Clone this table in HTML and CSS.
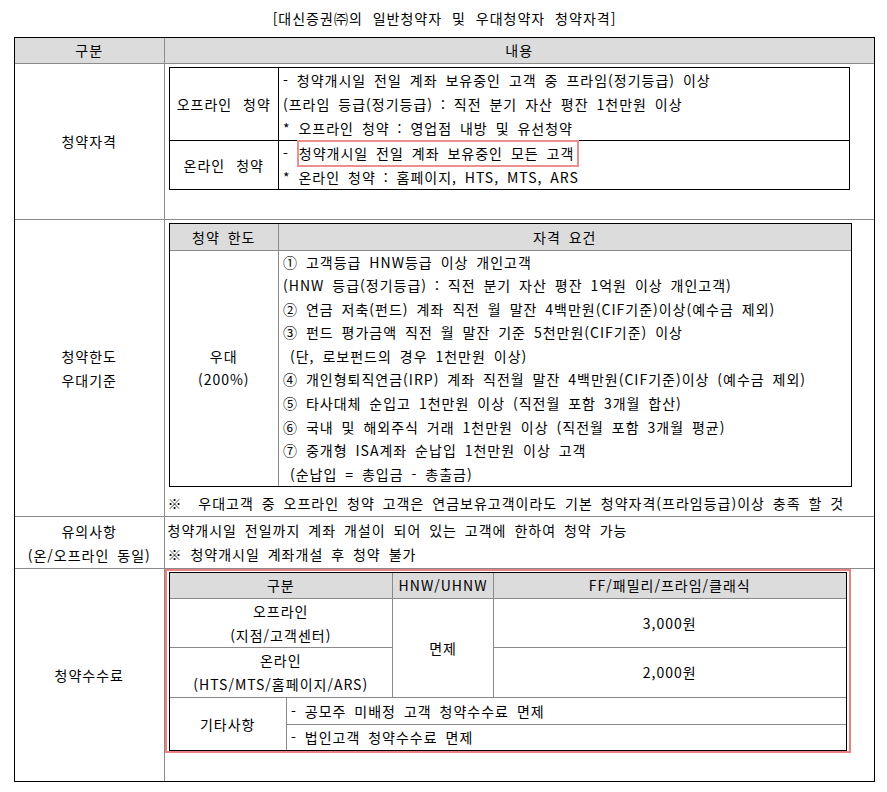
FILE: index.html
```html
<!DOCTYPE html>
<html lang="ko">
<head>
<meta charset="utf-8">
<title>청약자격</title>
<link rel="stylesheet" href="styles.css">
</head>
<body>
<div class="page">
  <p class="title">[대신증권㈜의 일반청약자 및 우대청약자 청약자격]</p>
  <div class="frame">
    <table class="main">
      <colgroup><col class="main-c1"><col></colgroup>
      <thead>
        <tr><th class="m-head">구분</th><th class="m-head">내용</th></tr>
      </thead>
      <tbody>
        <tr>
          <td class="m-label">청약자격</td>
          <td class="m-cell cell-qual">
            <div class="box box-qual">
              <table class="grid grid-dark">
                <colgroup><col class="g-c1"><col></colgroup>
                <tbody>
                  <tr>
                    <td class="g-label">오프라인 청약</td>
                    <td class="g-text">
                      <div>- 청약개시일 전일 계좌 보유중인 고객 중 프라임(정기등급) 이상</div>
                      <div>(프라임 등급(정기등급) : 직전 분기 자산 평잔 1천만원 이상</div>
                      <div>* 오프라인 청약 : 영업점 내방 및 유선청약</div>
                    </td>
                  </tr>
                  <tr>
                    <td class="g-label">온라인 청약</td>
                    <td class="g-text">
                      <div>- <span class="hl">청약개시일 전일 계좌 보유중인 모든 고객</span></div>
                      <div>* 온라인 청약 : 홈페이지, HTS, MTS, ARS</div>
                    </td>
                  </tr>
                </tbody>
              </table>
            </div>
          </td>
        </tr>
        <tr>
          <td class="m-label">청약한도<br>우대기준</td>
          <td class="m-cell cell-limit">
            <div class="box box-limit">
              <table class="grid grid-limit">
                <colgroup><col class="g-c1"><col></colgroup>
                <thead>
                  <tr><th class="g-head">청약 한도</th><th class="g-head">자격 요건</th></tr>
                </thead>
                <tbody>
                  <tr>
                    <td class="g-label">우대<br>(200%)</td>
                    <td class="g-text">
                      <div>① 고객등급 HNW등급 이상 개인고객</div>
                      <div>(HNW 등급(정기등급) : 직전 분기 자산 평잔 1억원 이상 개인고객)</div>
                      <div>② 연금 저축(펀드) 계좌 직전 월 말잔 4백만원(CIF기준)이상(예수금 제외)</div>
                      <div>③ 펀드 평가금액 직전 월 말잔 기준 5천만원(CIF기준) 이상</div>
                      <div class="indent">(단, 로보펀드의 경우 1천만원 이상)</div>
                      <div>④ 개인형퇴직연금(IRP) 계좌 직전월 말잔 4백만원(CIF기준)이상 (예수금 제외)</div>
                      <div>⑤ 타사대체 순입고 1천만원 이상 (직전월 포함 3개월 합산)</div>
                      <div>⑥ 국내 및 해외주식 거래 1천만원 이상 (직전월 포함 3개월 평균)</div>
                      <div>⑦ 중개형 ISA계좌 순납입 1천만원 이상 고객</div>
                      <div class="indent">(순납입 = 총입금 - 총출금)</div>
                    </td>
                  </tr>
                </tbody>
              </table>
            </div>
            <div class="note">※&nbsp; 우대고객 중 오프라인 청약 고객은 연금보유고객이라도 기본 청약자격(프라임등급)이상 충족 할 것</div>
          </td>
        </tr>
        <tr>
          <td class="m-label">유의사항<br>(온/오프라인 동일)</td>
          <td class="m-cell cell-caution">
            <div>청약개시일 전일까지 계좌 개설이 되어 있는 고객에 한하여 청약 가능</div>
            <div>※ 청약개시일 계좌개설 후 청약 불가</div>
          </td>
        </tr>
        <tr>
          <td class="m-label">청약수수료</td>
          <td class="m-cell cell-fee">
            <div class="redbox">
              <div class="box box-fee">
                <table class="grid grid-fee">
                  <colgroup><col class="f-c1"><col class="f-c2"><col class="f-c3"><col></colgroup>
                  <thead>
                    <tr class="f-head"><th colspan="2" class="g-head">구분</th><th class="g-head">HNW/UHNW</th><th class="g-head">FF/패밀리/프라임/클래식</th></tr>
                  </thead>
                  <tbody>
                    <tr class="f-off"><td colspan="2" class="f-center">오프라인<br>(지점/고객센터)</td><td rowspan="2" class="f-center">면제</td><td class="f-center">3,000원</td></tr>
                    <tr class="f-on"><td colspan="2" class="f-center">온라인<br>(HTS/MTS/홈페이지/ARS)</td><td class="f-center">2,000원</td></tr>
                    <tr class="f-etc1"><td rowspan="2" class="f-center">기타사항</td><td colspan="3" class="f-text">- 공모주 미배정 고객 청약수수료 면제</td></tr>
                    <tr class="f-etc2"><td colspan="3" class="f-text">- 법인고객 청약수수료 면제</td></tr>
                  </tbody>
                </table>
              </div>
            </div>
          </td>
        </tr>
      </tbody>
    </table>
  </div>
</div>
</body>
</html>
```

FILE: styles.css
```css
* { box-sizing: border-box; }

body {
  margin: 0;
  background: #fff;
  color: #000;
  font-family: "Noto Sans CJK KR", "Noto Sans", sans-serif;
  font-size: 14px;
  letter-spacing: 1px;
  word-spacing: 3px;
}

.page {
  padding: 8px 0 0 14px;
  width: 875px;
}

.title {
  margin: 0 0 9px;
  width: 861px;
  height: 20px;
  line-height: 20px;
  text-align: center;
  white-space: nowrap;
  word-spacing: 5px;
}

.frame {
  width: 861px;
  border: 1px solid #000;
}

.main {
  width: 100%;
  border-collapse: collapse;
  border-style: hidden;
  table-layout: fixed;
}

.main-c1 { width: 149px; }

.main > thead > tr > th,
.main > tbody > tr > td {
  border: 1px solid #8a8a8a;
  padding: 0;
}

.m-head {
  background: #dcdcdc;
  font-weight: normal;
  text-align: center;
  line-height: 24px;
  height: 25px;
  padding-top: 1px;
}

.m-label {
  text-align: center;
  vertical-align: middle;
  line-height: 24px;
  white-space: nowrap;
}

.m-cell {
  vertical-align: top;
  text-align: left;
  white-space: nowrap;
}

.cell-qual { padding: 3px 0 29px 3px !important; }
.cell-limit { padding: 3px 0 0 3px !important; }
.cell-caution { padding: 1px 0 2px 3px !important; line-height: 24px; }
.cell-fee { padding: 0 0 28px 0 !important; }

.box {
  border: 1px solid #000;
  margin-left: 1px;
}

.box-qual { width: 681px; }
.box-limit { width: 683px; }

.grid {
  width: 100%;
  border-collapse: collapse;
  border-style: hidden;
  table-layout: fixed;
}

.grid td,
.grid th {
  border: 1px solid #8a8a8a;
  padding: 0;
  font-weight: normal;
}

.grid-dark td { border-color: #000; }

.g-c1 { width: 109px; }

.g-label {
  text-align: center;
  vertical-align: middle;
  word-spacing: 6px;
}

.g-text {
  text-align: left;
  vertical-align: top;
  padding-left: 4px !important;
}

.grid-dark { line-height: 24px; }
.grid-limit { line-height: 23.6px; }

.g-head {
  background: #dcdcdc;
  text-align: center;
  line-height: 26px;
}

.indent { padding-left: 7px; }

.hl {
  border: 2px solid #ef8e8e;
  padding: 1px 3px 2px 0;
}

.note {
  margin-top: 5px;
  line-height: 23.6px;
}

.redbox {
  width: 686px;
  border: 2px solid #ea8080;
  padding: 1px 2px 0 2px;
}

.box-fee {
  width: 678px;
  margin-left: 0;
}

.grid-fee { line-height: 24px; }

.f-c1 { width: 117px; }
.f-c2 { width: 106px; }
.f-c3 { width: 101px; }

.f-head th { line-height: 25px; }
.f-on td { padding-bottom: 1px; }
.f-etc1 td { line-height: 26px; }
.f-etc2 td { line-height: 25px; }

.f-center {
  text-align: center;
  vertical-align: middle;
}

.f-text {
  text-align: left;
  padding-left: 4px !important;
}
```
